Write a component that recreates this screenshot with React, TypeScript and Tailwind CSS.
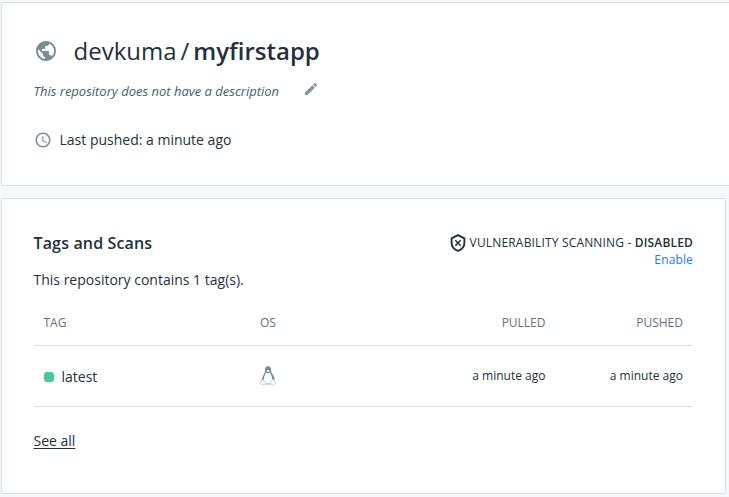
import { MdAccessTime, MdEdit, MdPublic } from "react-icons/md";

function ShieldOff() {
  return (
    <svg className="relative top-px h-[18px] w-4 shrink-0" viewBox="0 0 16 18" fill="none" stroke="#22313a">
      <path d="M8 1.100 14.400 4.300V8.800C14.400 12.600 11.800 15.600 8 16.900 4.200 15.600 1.600 12.600 1.600 8.800V4.300Z" strokeWidth="1.9" />
      <path d="M5.300 6.300 10.700 11.700M10.700 6.300 5.300 11.700" strokeWidth="1.6" />
    </svg>
  );
}

function Tux() {
  return (
    <svg className="h-5 w-4" viewBox="0 0 16 20" fill="none">
      <path d="M5 4C4.900 1.600 6 .3 8 .3s3.100 1.300 3.100 3.700c0 2 .5 3 1.600 4.600 1.400 2.100 2.200 4 1.600 6.400l-2.600 3H4.600L1.700 14.800c-.2-2 .7-3.800 1.800-5.800C4.600 7.200 5.100 6 5 4Z" fill="#748b99" />
      <path d="M5.900 6.600 8 7.500l2-1c.6 1.900 2.200 4 2.200 6.800 0 1.800-.7 3.500-1.600 4.600H5.600c-1.300-1-2-2.500-2-4.200 0-2.500 1.700-4.600 2.300-7.100Z" fill="#fff" />
      <path d="m6.200 4.900 1.700-.8 1.900.8-1.800 1.400Z" fill="#fff" />
      <path d="M2.600 13.300 5.500 17c.6 1.100-.3 2.100-1.500 1.800L.8 18c-.6-.3-.2-1.300-.1-2 0-.8 1-1 1.900-2.700ZM13.300 13.300c.2 1.300 1.800 1.700 1.800 2.600 0 .5.700 1.200.3 1.600l-3 1.400c-1.200.4-2-.4-1.800-1.600l.3-3Z" fill="#fff" stroke="#aebbc3" strokeWidth=".6" />
      <path d="M5.700 18h4.900" stroke="#748b99" strokeWidth=".7" />
    </svg>
  );
}

export default function App() {
  return (
    <div className="h-[497px] overflow-hidden bg-[#f5f7f9] pt-[2px] pl-px font-['Open_Sans',sans-serif] text-sm text-[#22313a]">
      <section className="h-[184px] w-[740px] rounded-[3px] border border-[#d8dfe3] bg-white pt-8 pl-[31.5px]">
        <h1 className="flex h-8 items-center text-2xl leading-8">
          <MdPublic className="mr-4 size-6 shrink-0 text-[#7a8e9a]" />
          <span>devkuma</span>
          <span className="mx-1">/</span>
          <span className="font-semibold">myfirstapp</span>
        </h1>
        <div className="mt-[14px] flex h-5 items-center text-[13px] text-[#445d6e]">
          <em>This repository does not have a description</em>
          <MdEdit className="relative -top-0.5 ml-6 size-4 text-[#8494a0]" />
        </div>
        <div className="mt-[29px] flex h-5 items-center">
          <MdAccessTime className="mr-2 size-[18px] text-[#7a8e9a]" />
          <span>Last pushed: a minute ago</span>
        </div>
      </section>
      <section className="mt-3 h-[296px] w-[725px] rounded-[3px] border border-[#d8dfe3] bg-white pt-[34px] pr-8 pl-[31.5px]">
        <header className="flex h-[37px] items-start justify-between">
          <h2 className="text-base leading-5 font-semibold tracking-[0.15px]">Tags and Scans</h2>
          <div className="flex flex-col items-end text-xs leading-[17px]">
            <div className="flex h-[18px] items-center">
              <ShieldOff />
              <span className="ml-1 tracking-[0.165px]">VULNERABILITY SCANNING - <b className="font-semibold">DISABLED</b></span>
            </div>
            <a className="tracking-[0.14px] text-[#2779f5]">Enable</a>
          </div>
        </header>
        <p className="leading-5">This repository contains 1 tag(s).</p>
        <table className="mt-[9px] w-full table-fixed border-collapse text-xs">
          <thead>
            <tr className="h-[46px] border-b border-[#d8dfe3] text-[#62717d]">
              <th className="w-[216.5px] pt-[2px] pl-[10px] text-left font-normal">TAG</th>
              <th className="w-[158px] pt-[2px] pl-[10px] text-left font-normal">OS</th>
              <th className="pt-[2px] pr-[10px] text-right font-normal">PULLED</th>
              <th className="w-[137.5px] pt-[2px] pr-[10px] text-right font-normal">PUSHED</th>
            </tr>
          </thead>
          <tbody>
            <tr className="h-[61px] border-b border-[#d8dfe3]">
              <td className="pt-0.5 pl-[10px]">
                <div className="flex items-center gap-2 text-sm">
                  <span className="size-[10px] rounded-[3px] bg-[#43c9a2]" />
                  <span>latest</span>
                </div>
              </td>
              <td className="pl-[10px]"><Tux /></td>
              <td className="pr-[10px] text-right">a minute ago</td>
              <td className="pr-[10px] text-right">a minute ago</td>
            </tr>
          </tbody>
        </table>
        <a className="mt-6 block w-fit leading-5 underline underline-offset-2">See all</a>
      </section>
    </div>
  );
}
